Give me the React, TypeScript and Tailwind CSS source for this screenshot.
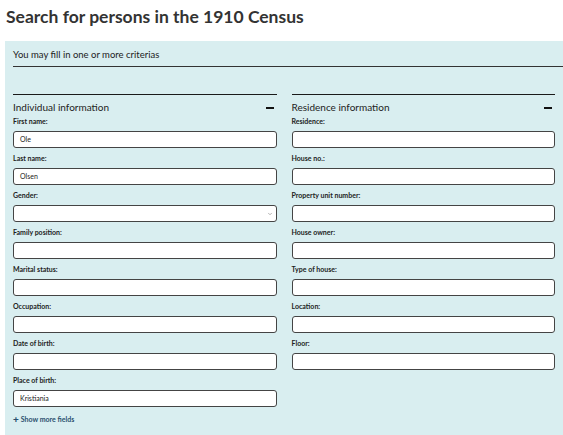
import { ChevronDown } from "lucide-react";

type Field = { label: string; value?: string; select?: boolean };

const individual: Field[] = [
  { label: "First name:", value: "Ole" },
  { label: "Last name:", value: "Olsen" },
  { label: "Gender:", select: true },
  { label: "Family position:" },
  { label: "Marital status:" },
  { label: "Occupation:" },
  { label: "Date of birth:" },
  { label: "Place of birth:", value: "Kristiania" },
];

const residence: Field[] = [
  { label: "Residence:" },
  { label: "House no.:" },
  { label: "Property unit number:" },
  { label: "House owner:" },
  { label: "Type of house:" },
  { label: "Location:" },
  { label: "Floor:" },
];

function FieldRow({ field }: { field: Field }) {
  return (
    <div className="flex flex-col">
      <label className="h-[9px] text-[7px] font-bold leading-[9px] text-[#222]">{field.label}</label>
      <div className="relative mt-[5px] flex h-[17px] items-center rounded-[3px] border border-[#444] bg-white px-[6px]">
        <span className="text-[7px] leading-none text-[#222]">{field.value ?? ""}</span>
        {field.select ? (
          <ChevronDown className="absolute right-[3px] top-[5px] h-[6px] w-[6px] text-[#999]" strokeWidth={3} />
        ) : null}
      </div>
    </div>
  );
}

function Section({ title, fields, footer }: { title: string; fields: Field[]; footer?: boolean }) {
  return (
    <div className="flex flex-col">
      <div className="flex h-[23px] items-center justify-between border-t border-[#1a1a1a] pt-[3px]">
        <span className="text-[10px] text-[#222]">{title}</span>
        <span className="mr-[3px] h-[2px] w-[8px] bg-[#111]" />
      </div>
      <div className="flex flex-col gap-[6px]">
        {fields.map((f) => (
          <FieldRow key={f.label} field={f} />
        ))}
      </div>
      {footer ? (
        <div className="mt-[7px] flex items-center gap-[2px] text-[7px] font-bold text-[#2a4f6e]">
          <span className="text-[10px] font-black leading-none">+</span>
          <span>Show more fields</span>
        </div>
      ) : null}
    </div>
  );
}

export default function App() {
  return (
    <div className="h-[435px] w-[563px] overflow-hidden bg-white" style={{ fontFamily: "Lato, 'Noto Sans', sans-serif" }}>
      <h1 className="px-[6px] pt-[6px] text-[17.5px] font-bold leading-[22px] text-[#333]">
        Search for persons in the 1910 Census
      </h1>
      <div className="ml-[5px] mt-[13px] bg-[#d9eef0] pb-[20px] pl-[8px] pr-[8px]">
        <div className="-mr-[8px] border-b border-[#333] pb-[5px] pt-[7px] text-[9.5px] leading-[13px] text-[#222]">
          You may fill in one or more criterias
        </div>
        <div className="mt-[27px] grid grid-cols-2 gap-x-[15px]">
          <Section title="Individual information" fields={individual} footer />
          <Section title="Residence information" fields={residence} />
        </div>
      </div>
    </div>
  );
}
